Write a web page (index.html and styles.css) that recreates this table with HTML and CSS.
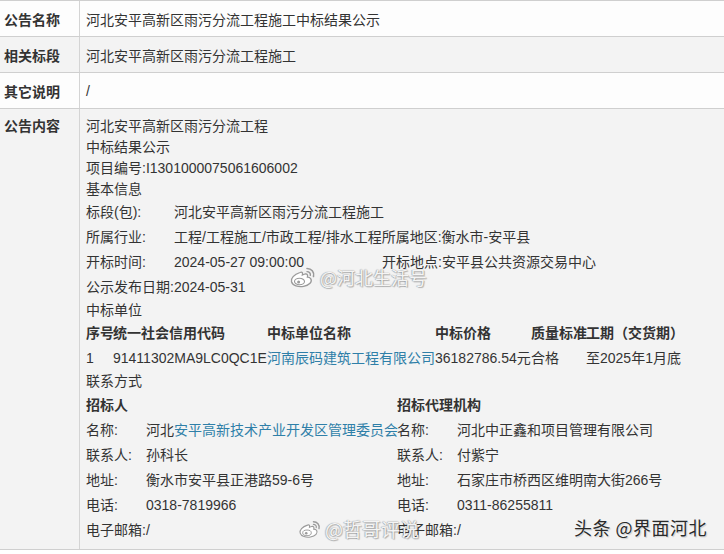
FILE: index.html
```html
<!DOCTYPE html>
<html lang="zh-CN">
<head>
<meta charset="utf-8">
<link rel="stylesheet" href="styles.css">
</head>
<body>
<div class="page">
  <div class="row short white">
    <div class="label">公告名称</div>
    <div class="value">河北安平高新区雨污分流工程施工中标结果公示</div>
  </div>
  <div class="row short gray">
    <div class="label">相关标段</div>
    <div class="value">河北安平高新区雨污分流工程施工</div>
  </div>
  <div class="row short white">
    <div class="label">其它说明</div>
    <div class="value">/</div>
  </div>
  <div class="row content gray">
    <div class="label top">公告内容</div>
    <div class="value body">
      <div class="line">河北安平高新区雨污分流工程</div>
      <div class="line">中标结果公示</div>
      <div class="line">项目编号:I1301000075061606002</div>
      <div class="line">基本信息</div>
      <div class="info">
        <div class="info-row"><span class="k">标段(包):</span><span>河北安平高新区雨污分流工程施工</span></div>
        <div class="info-row"><span class="k">所属行业:</span><span>工程/工程施工/市政工程/排水工程所属地区:衡水市-安平县</span></div>
        <div class="info-row"><span class="k">开标时间:</span><span class="v2">2024-05-27 09:00:00</span><span>开标地点:安平县公共资源交易中心</span></div>
        <div class="info-row"><span>公示发布日期:2024-05-31</span></div>
      </div>
      <div class="line">中标单位</div>
      <div class="win head">
        <span>序号</span><span>统一社会信用代码</span><span>中标单位名称</span><span>中标价格</span><span>质量标准</span><span>工期（交货期）</span>
      </div>
      <div class="win data">
        <span>1</span><span>91411302MA9LC0QC1E</span><span class="link">河南辰码建筑工程有限公司</span><span>36182786.54元</span><span>合格</span><span>至2025年1月底</span>
      </div>
      <div class="line">联系方式</div>
      <div class="contact chead">
        <span class="span2 b">招标人</span><span class="span2 b">招标代理机构</span>
      </div>
      <div class="contact">
        <span>名称:</span><span>河北<span class="link">安平高新技术产业开发区管理委员会</span></span><span>名称:</span><span>河北中正鑫和项目管理有限公司</span>
        <span>联系人:</span><span>孙科长</span><span>联系人:</span><span>付紫宁</span>
        <span>地址:</span><span>衡水市安平县正港路59-6号</span><span>地址:</span><span>石家庄市桥西区维明南大街266号</span>
        <span>电话:</span><span>0318-7819966</span><span>电话:</span><span>0311-86255811</span>
        <span class="span2">电子邮箱:/</span><span class="span2">电子邮箱:/</span>
      </div>
    </div>
  </div>

  <div class="wm wm-1">
    <svg class="wb" viewBox="0 0 28 22" width="28" height="22" aria-hidden="true">
      <path d="M11 6.5C5 8.5 1.5 12.5 2.5 15.8C3.6 19.6 9.5 21.2 14.5 20.3C20.5 19.3 23.5 15.6 21.8 12.8C21 11.5 19.6 11.2 18.4 11.2C19 9.2 18.3 7.4 16 8C14.6 8.4 13.4 9 13.4 9C13.9 6.6 13.2 5.7 11 6.5Z" fill="#fff" stroke="#9a9a9a" stroke-width="1.3"/>
      <ellipse cx="10.5" cy="15.5" rx="5" ry="3.3" fill="#fff" stroke="#9a9a9a" stroke-width="1.1"/>
      <circle cx="9.6" cy="16" r="1.5" fill="#9a9a9a"/>
      <path d="M18 2.5C22.5 2.5 25.5 6 24.5 10.5" fill="none" stroke="#9a9a9a" stroke-width="1.6" stroke-linecap="round"/>
      <path d="M18 5.6C20.3 5.6 21.8 7.3 21.3 9.4" fill="none" stroke="#9a9a9a" stroke-width="1.4" stroke-linecap="round"/>
    </svg>
    <span class="wm-text">@河北生活号</span>
  </div>
  <div class="wm wm-2">
    <svg class="wb" viewBox="0 0 28 22" width="24" height="20" aria-hidden="true">
      <path d="M11 6.5C5 8.5 1.5 12.5 2.5 15.8C3.6 19.6 9.5 21.2 14.5 20.3C20.5 19.3 23.5 15.6 21.8 12.8C21 11.5 19.6 11.2 18.4 11.2C19 9.2 18.3 7.4 16 8C14.6 8.4 13.4 9 13.4 9C13.9 6.6 13.2 5.7 11 6.5Z" fill="#fff" stroke="#9a9a9a" stroke-width="1.3"/>
      <ellipse cx="10.5" cy="15.5" rx="5" ry="3.3" fill="#fff" stroke="#9a9a9a" stroke-width="1.1"/>
      <circle cx="9.6" cy="16" r="1.5" fill="#9a9a9a"/>
      <path d="M18 2.5C22.5 2.5 25.5 6 24.5 10.5" fill="none" stroke="#9a9a9a" stroke-width="1.6" stroke-linecap="round"/>
      <path d="M18 5.6C20.3 5.6 21.8 7.3 21.3 9.4" fill="none" stroke="#9a9a9a" stroke-width="1.4" stroke-linecap="round"/>
    </svg>
    <span class="wm-text big">@哲哥评说</span>
  </div>
  <div class="toutiao">头条 @界面河北</div>
</div>
</body>
</html>
```
FILE: styles.css
```css
html, body {
  margin: 0;
  padding: 0;
  background: #ffffff;
}
body {
  font-family: "Liberation Sans", "Noto Sans CJK SC", sans-serif;
  font-size: 14px;
  color: #333333;
}
.page {
  position: relative;
  width: 724px;
  height: 554px;
  overflow: hidden;
  background: #ffffff;
}
.row {
  display: flex;
  border-top: 1px solid #cfcfcf;
}
.row.short {
  height: 35px;
  align-items: center;
}
.row.content {
  border-bottom: 1px solid #cfcfcf;
  height: 440px;
}
.white { background: #fdfdfd; }
.gray { background: #f3f3f3; }
.label {
  width: 75px;
  padding-left: 4px;
  border-right: 1px solid #d4d4d4;
  font-weight: bold;
  align-self: stretch;
  display: flex;
  align-items: center;
  flex-shrink: 0;
  white-space: nowrap;
}
.label.top {
  align-items: flex-start;
  padding-top: 7px;
  line-height: 21px;
}
.value {
  padding-left: 6px;
  white-space: nowrap;
}
.value.body {
  padding-top: 7px;
  flex: 1;
}
.line {
  height: 21px;
  line-height: 21px;
}
.info-row {
  display: flex;
  height: 25px;
  line-height: 25px;
}
.info-row .k {
  width: 88px;
  flex-shrink: 0;
}
.info-row .v2 {
  width: 208px;
  flex-shrink: 0;
}
.win {
  display: grid;
  grid-template-columns: 27px 154px 168px 96px 55px auto;
  white-space: nowrap;
}
.win.head {
  height: 24px;
  line-height: 24px;
  font-weight: bold;
}
.win.data {
  height: 26px;
  line-height: 26px;
}
.link { color: #2f7fa8; }
.contact {
  display: grid;
  grid-template-columns: 60px 251px 60px auto;
  grid-auto-rows: 25px;
  line-height: 25px;
  white-space: nowrap;
}
.contact.chead {
  grid-auto-rows: 26px;
  line-height: 26px;
}
.span2 { grid-column: span 2; }
.b { font-weight: bold; }

.wm {
  position: absolute;
  display: flex;
  align-items: center;
  gap: 3px;
}
.wm-1 { left: 289px; top: 265px; }
.wm-2 { left: 298px; top: 517px; }
.wm-text {
  font-family: "Noto Sans CJK SC", sans-serif;
  font-size: 18px;
  line-height: 24px;
  color: rgba(255, 255, 255, 0.92);
  text-shadow: 0 0 1px #8a8a8a, 1px 1px 1px rgba(0, 0, 0, 0.25), -1px 0 1px rgba(0, 0, 0, 0.18);
}
.wm-text.big { font-size: 19px; }
.toutiao {
  position: absolute;
  left: 574px;
  top: 515px;
  font-family: "Noto Sans CJK SC", sans-serif;
  font-size: 18px;
  line-height: 24px;
  color: #2a2a2a;
  letter-spacing: 0.5px;
  text-shadow: 0 0 2px #ffffff, 1px 1px 1px rgba(0, 0, 0, 0.2);
}
```
